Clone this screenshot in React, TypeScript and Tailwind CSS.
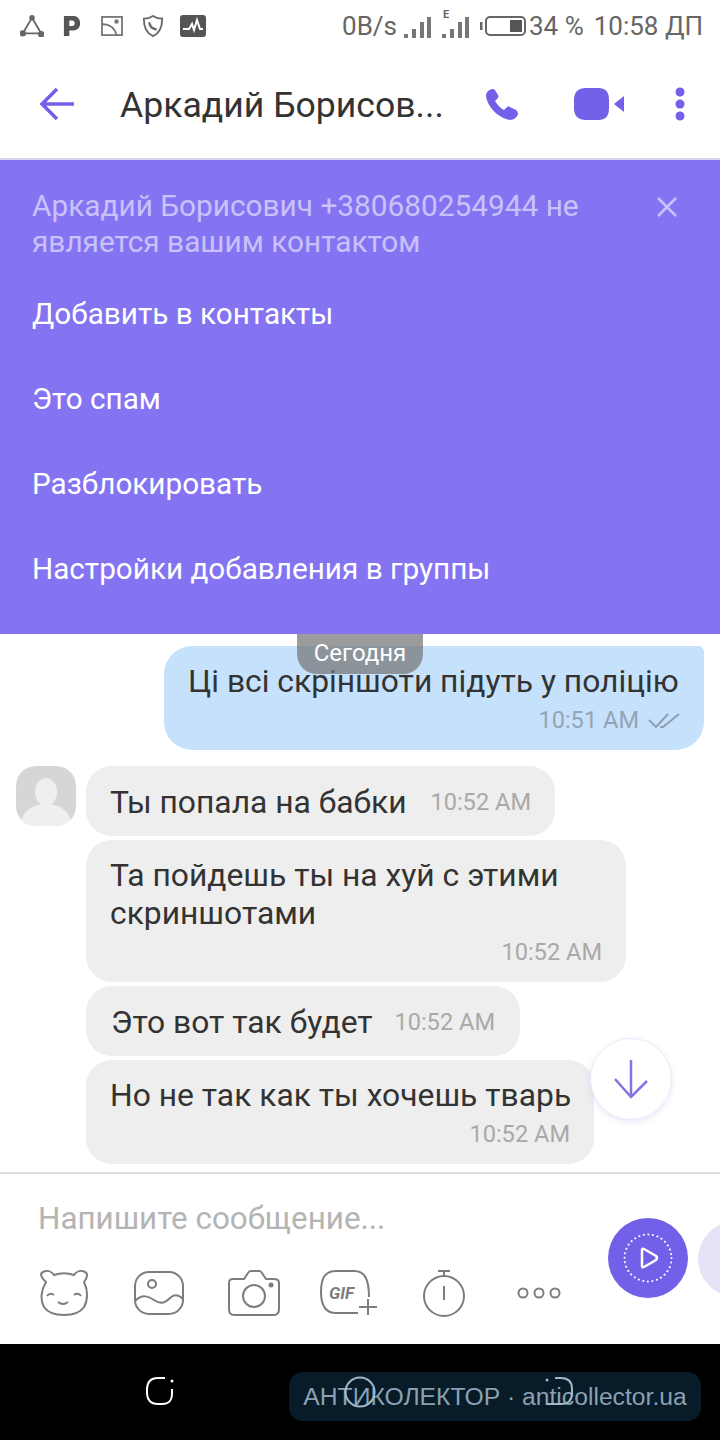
const TIME = 'text-[23.6px] leading-[40px] text-[#a9a9a9]';

function StatusLeftIcons() {
  return (
    <div className="flex items-center">
      <svg width="24" height="22" viewBox="0 0 26 24" fill="none" stroke="#666" strokeWidth="2" className="ml-[20px]">
        <path d="M13 3 L23 20 H3 Z" />
        <circle cx="13" cy="3" r="2" fill="#666" />
        <circle cx="3" cy="20" r="2.5" fill="#666" />
        <circle cx="23" cy="21" r="2.5" fill="#666" />
      </svg>
      <svg width="18" height="22" viewBox="0 0 20 24" className="ml-[19px]">
        <path fillRule="evenodd" fill="#555" d="M1 1 H11 C16 1 19 4 19 9 C19 14 16 17 11 17 H7 V23 H1 Z M7 6 V12 H10 C12 12 13 11 13 9 C13 7 12 6 10 6 Z" />
      </svg>
      <svg width="24" height="20" viewBox="0 0 24 22" fill="none" stroke="#777" strokeWidth="2" className="ml-[19px]">
        <rect x="1" y="1" width="22" height="20" />
        <path d="M1 9 C9 9 15 13 17 21" />
        <circle cx="17" cy="6" r="1.5" fill="#777" />
      </svg>
      <svg width="22" height="22" viewBox="0 0 22 24" fill="none" stroke="#666" strokeWidth="2" className="ml-[18px]">
        <path d="M11 1 C14 3 17 4 21 4 C21 13 18 20 11 23 C4 20 1 13 1 4 C5 4 8 3 11 1 Z" />
        <path d="M7 8 C7 12 10 15 15 16" strokeWidth="2.5" />
      </svg>
      <svg width="26" height="22" viewBox="0 0 26 22" className="ml-[16px]">
        <rect width="26" height="22" rx="3" fill="#555" />
        <path d="M3 14 H9 L12 9 L14 15 L17 5 L20 14 H23" fill="none" stroke="#fff" strokeWidth="2" />
      </svg>
    </div>
  );
}

function Signal({ edge }: { edge?: boolean }) {
  return (
    <svg width="28" height="30" viewBox="0 0 28 30" fill="#777">
      {edge && (
        <text x="2" y="9" fontSize="11" fontWeight="700" fontFamily="Roboto, sans-serif" fill="#666">E</text>
      )}
      <rect x="1" y="25" width="4" height="4" />
      <rect x="9" y="20" width="4" height="9" />
      <rect x="17" y="13" width="4" height="16" />
      <rect x="24" y="8" width="4" height="21" />
    </svg>
  );
}

function StatusBar() {
  return (
    <div className="flex h-[52px] items-center justify-between pr-[17px] text-[26px] text-[#666]">
      <StatusLeftIcons />
      <div className="flex items-center">
        <span>0B/s</span>
        <div className="ml-[6px] mt-[-4px]">
          <Signal />
        </div>
        <div className="ml-[10px] mt-[-4px]">
          <Signal edge />
        </div>
        <svg width="46" height="20" viewBox="0 0 46 20" fill="none" className="ml-[11px]">
          <rect x="0" y="6" width="2.5" height="8" fill="#666" />
          <rect x="6" y="1" width="39" height="18" rx="4" stroke="#666" strokeWidth="2" />
          <rect x="30" y="4" width="12" height="12" fill="#555" />
        </svg>
        <span className="ml-[3px]">34 %</span>
        <span className="ml-[10px]">10:58 ДП</span>
      </div>
    </div>
  );
}

function Header() {
  return (
    <div className="flex h-[108px] items-center border-b-2 border-[#d6d4ee] pb-[2px]">
      <svg width="34" height="34" viewBox="0 0 34 34" fill="none" stroke="#7360e8" strokeWidth="3.5" className="ml-[40px]">
        <path d="M34 17 H3" />
        <path d="M17 2 L2 17 L17 32" />
      </svg>
      <div className="ml-[46px] mt-[3px] w-[340px] text-[35.6px] text-[#333]">Аркадий Борисов...</div>
      <svg width="32" height="32" viewBox="0 0 32 32" fill="#7360e8" className="ml-[26px]">
        <path d="M6 1 C3 2 0 4 0 8 C1 18 12 30 24 32 C28 32 31 29 32 26 C32 24 31 23 30 22 L24 19 C22 18 21 19 20 20 L18 22 C14 20 11 16 9 13 L11 11 C12 10 13 9 12 7 L9 2 C8 1 7 1 6 1 Z" />
      </svg>
      <svg width="50" height="32" viewBox="0 0 50 32" fill="#7360e8" className="ml-[56px]">
        <path d="M12 0 H24 C32 0 35 4 35 12 V20 C35 28 32 32 24 32 H12 C4 32 0 28 0 20 V12 C0 4 4 0 12 0 Z" />
        <path d="M50 8 V24 L40 16 Z" />
      </svg>
      <svg width="10" height="34" viewBox="0 0 10 34" fill="#7360e8" className="ml-[51px]">
        <circle cx="5" cy="5" r="4.5" />
        <circle cx="5" cy="17" r="4.5" />
        <circle cx="5" cy="29" r="4.5" />
      </svg>
    </div>
  );
}

const bannerActions = ['Добавить в контакты', 'Это спам', 'Разблокировать', 'Настройки добавления в группы'];

function Banner() {
  return (
    <div className="h-[474px] bg-[#8574f2] pl-[32px] pt-[28px]">
      <div className="flex">
        <p className="w-[590px] text-[29.8px] leading-[36px] text-[#c9c2fa]">
          Аркадий Борисович +380680254944 не является вашим контактом
        </p>
        <svg width="22" height="22" viewBox="0 0 22 22" stroke="#c9c2fa" strokeWidth="2.5" className="ml-[34px] mt-[8px]">
          <path d="M2 2 L20 20 M20 2 L2 20" />
        </svg>
      </div>
      <div className="mt-[12px] flex flex-col">
        {bannerActions.map((label) => (
          <div key={label} className="flex h-[85px] items-center text-[29.7px] text-white">
            {label}
          </div>
        ))}
      </div>
    </div>
  );
}

function Avatar() {
  return (
    <div className="h-[60px] w-[60px] shrink-0 overflow-hidden rounded-[20px] bg-[#d6d6d6]">
      <svg width="60" height="60" viewBox="0 0 60 60">
        <ellipse cx="30" cy="26" rx="11" ry="14" fill="#efefef" />
        <ellipse cx="30" cy="55" rx="24" ry="17" fill="#efefef" />
      </svg>
    </div>
  );
}

function Chat() {
  return (
    <div className="relative h-[538px] overflow-hidden px-[16px] pt-[12px] text-[31.8px] leading-[38px] text-[#333]">
      <div className="ml-auto h-[104px] w-[540px] rounded-[28px] rounded-tr-[6px] bg-[#c5e1fb] px-[24px] pt-[16px]">
        <div className="whitespace-nowrap">Ці всі скріншоти підуть у поліцію</div>
        <div className="flex items-center justify-end">
          <span className="text-[23.6px] leading-[40px] text-[#93a4b3]">10:51 AM</span>
          <svg width="32" height="16" viewBox="0 0 32 16" fill="none" stroke="#8ea0b0" strokeWidth="2" className="ml-[9px]">
            <path d="M1 8 L8 15 L20 2" />
            <path d="M12 15 L15 15 L31 2" />
          </svg>
        </div>
      </div>
      <div className="absolute left-[297px] top-0 flex h-[40px] w-[126px] items-end justify-center rounded-b-[20px] bg-[#727272]/70 pb-[6px] text-[24px] leading-[30px] text-white">
        Сегодня
      </div>
      <div className="mt-[16px] flex gap-[10px]">
        <Avatar />
        <div className="flex flex-col items-start gap-[4px]">
          <div className="flex h-[70px] w-[469px] items-center justify-between rounded-[26px] bg-[#eeeeee] px-[24px] pt-[2px]">
            <span>Ты попала на бабки</span>
            <span className={TIME}>10:52 AM</span>
          </div>
          <div className="h-[142px] w-[540px] rounded-[26px] bg-[#eeeeee] px-[24px] pt-[16px]">
            <div>Та пойдешь ты на хуй с этими скриншотами</div>
            <div className={`text-right ${TIME}`}>10:52 AM</div>
          </div>
          <div className="flex h-[70px] w-[434px] items-center justify-between rounded-[26px] bg-[#eeeeee] px-[25px] pt-[2px]">
            <span>Это вот так будет</span>
            <span className={TIME}>10:52 AM</span>
          </div>
          <div className="h-[104px] w-[508px] rounded-[26px] bg-[#eeeeee] px-[24px] pt-[16px]">
            <div className="whitespace-nowrap">Но не так как ты хочешь тварь</div>
            <div className={`text-right ${TIME}`}>10:52 AM</div>
          </div>
        </div>
      </div>
      <div className="absolute bottom-[52px] right-[48px] flex h-[82px] w-[82px] items-center justify-center rounded-full border border-[#eceaf8] bg-white shadow-[0_2px_6px_rgba(115,96,232,0.15)]">
        <svg width="36" height="40" viewBox="0 0 36 40" fill="none" stroke="#8474e0" strokeWidth="2.5">
          <path d="M18 1 V38" />
          <path d="M2 20 L18 38 L34 22" />
        </svg>
      </div>
    </div>
  );
}

function ToolIcons() {
  const stroke = { fill: 'none', stroke: '#7d7d7d', strokeWidth: 2 };
  return (
    <div className="mt-[30px] grid grid-cols-[repeat(6,95px)] items-center justify-items-center pl-[16px]">
      <svg width="52" height="46" viewBox="0 0 52 46" {...stroke}>
        <path d="M8 12 C3 8 1 3 6 1.5 C10 0 14 2 16 5 C22 3 30 3 36 5 C38 2 42 0 46 1.5 C51 3 49 8 46 12 C50 20 50 30 46 37 C42 43 34 45 26 45 C18 45 10 43 6 37 C2 30 3 20 8 12 Z" />
        <path d="M9 26 q3 -4 7 -1 M36 25 q4 -3 7 1 M20 32 q5 4 10 0" />
      </svg>
      <svg width="50" height="44" viewBox="0 0 50 44" {...stroke}>
        <rect x="1" y="1" width="48" height="42" rx="14" />
        <circle cx="18" cy="13" r="4" />
        <path d="M1 30 C8 23 14 25 20 29 C26 33 30 33 36 27 C40 23 44 23 49 28" />
      </svg>
      <svg width="52" height="46" viewBox="0 0 52 46" {...stroke}>
        <path d="M5 9 H16 L20 3 Q21 1 23 1 H31 Q33 1 34 3 L38 9 H46 Q51 9 51 13 V39 Q51 45 46 45 H6 Q1 45 1 39 V13 Q1 9 5 9 Z" />
        <circle cx="26" cy="26" r="11" />
        <circle cx="43" cy="15" r="1.5" fill="#7d7d7d" />
      </svg>
      <svg width="58" height="46" viewBox="0 0 58 46" {...stroke}>
        <path d="M38 43 H16 C5 43 1 35 1 22 C1 8 5 1 16 1 H34 C44 1 49 8 49 27" />
        <path d="M48 29 V45 M39 37 H57" />
        <text x="9" y="29" fontSize="17" fontWeight="700" fontStyle="italic" fontFamily="Roboto, sans-serif" fill="#7d7d7d" stroke="none">GIF</text>
      </svg>
      <svg width="44" height="48" viewBox="0 0 44 48" {...stroke} className="mt-[2px]">
        <path d="M16 1 H28 M22 1 V7" />
        <circle cx="22" cy="26" r="20" />
        <path d="M22 16 V30" />
      </svg>
      <svg width="46" height="14" viewBox="0 0 46 14" {...stroke}>
        <circle cx="7" cy="7" r="4.5" />
        <circle cx="23" cy="7" r="4.5" />
        <circle cx="39" cy="7" r="4.5" />
      </svg>
    </div>
  );
}

function Composer() {
  return (
    <div className="flex h-[172px] overflow-hidden border-t-2 border-[#dddddd]">
      <div className="w-[608px] shrink-0 pt-[26px]">
        <div className="pl-[38px] text-[31.4px] leading-[38px] text-[#b4b4b4]">Напишите сообщение...</div>
        <ToolIcons />
      </div>
      <div className="mt-[44px] flex h-[80px] w-[80px] shrink-0 items-center justify-center rounded-full bg-[#7360e8]">
        <svg width="52" height="52" viewBox="0 0 52 52" fill="none" stroke="#fff">
          <circle cx="26" cy="26" r="23.5" strokeWidth="2" strokeLinecap="round" strokeDasharray="0.1 4.5" />
          <path d="M20 18 V34 Q20 36 22 35 L34 28 Q36 26 34 24 L22 17 Q20 16 20 18 Z" strokeWidth="2.5" />
        </svg>
      </div>
      <div className="ml-[10px] mt-[47px] h-[76px] w-[76px] shrink-0 rounded-full bg-[#e6e3f8]" />
    </div>
  );
}

function NavBar() {
  return (
    <div className="relative flex h-[96px] items-start bg-black pt-[32px]">
      <div className="absolute left-[289px] top-[28px] flex h-[49px] w-[412px] items-center justify-center rounded-[14px] bg-[#071b29] font-['Liberation_Sans',sans-serif] text-[24.7px] text-[#8ba1b1]">
        АНТИКОЛЕКТОР · anticollector.ua
      </div>
      <svg width="30" height="30" viewBox="0 0 30 30" fill="none" stroke="#fff" strokeWidth="2" className="relative ml-[145px]">
        <path d="M20 2 H13 C5 2 2 6 2 14 V16 C2 24 5 28 13 28 H17 C24 28 27 25 27 17 V13" />
        <circle cx="27" cy="5" r="1.5" fill="#fff" stroke="none" />
      </svg>
      <svg width="32" height="32" viewBox="0 0 32 32" fill="none" stroke="#a3b8c6" strokeWidth="2" className="relative ml-[169px]">
        <circle cx="16" cy="16" r="14.5" />
      </svg>
      <svg width="30" height="30" viewBox="0 0 30 30" fill="none" stroke="#a3b8c6" strokeWidth="2" className="relative ml-[169px]">
        <path d="M10 2 H16 C23 2 27 6 27 13 V17 C27 24 23 28 16 28 H2" />
        <circle cx="2" cy="4" r="1.5" fill="#a3b8c6" stroke="none" />
      </svg>
    </div>
  );
}

export default function App() {
  return (
    <div className="h-[1440px] w-[720px] overflow-hidden bg-white font-[Roboto,sans-serif]">
      <StatusBar />
      <Header />
      <Banner />
      <Chat />
      <Composer />
      <NavBar />
    </div>
  );
}
